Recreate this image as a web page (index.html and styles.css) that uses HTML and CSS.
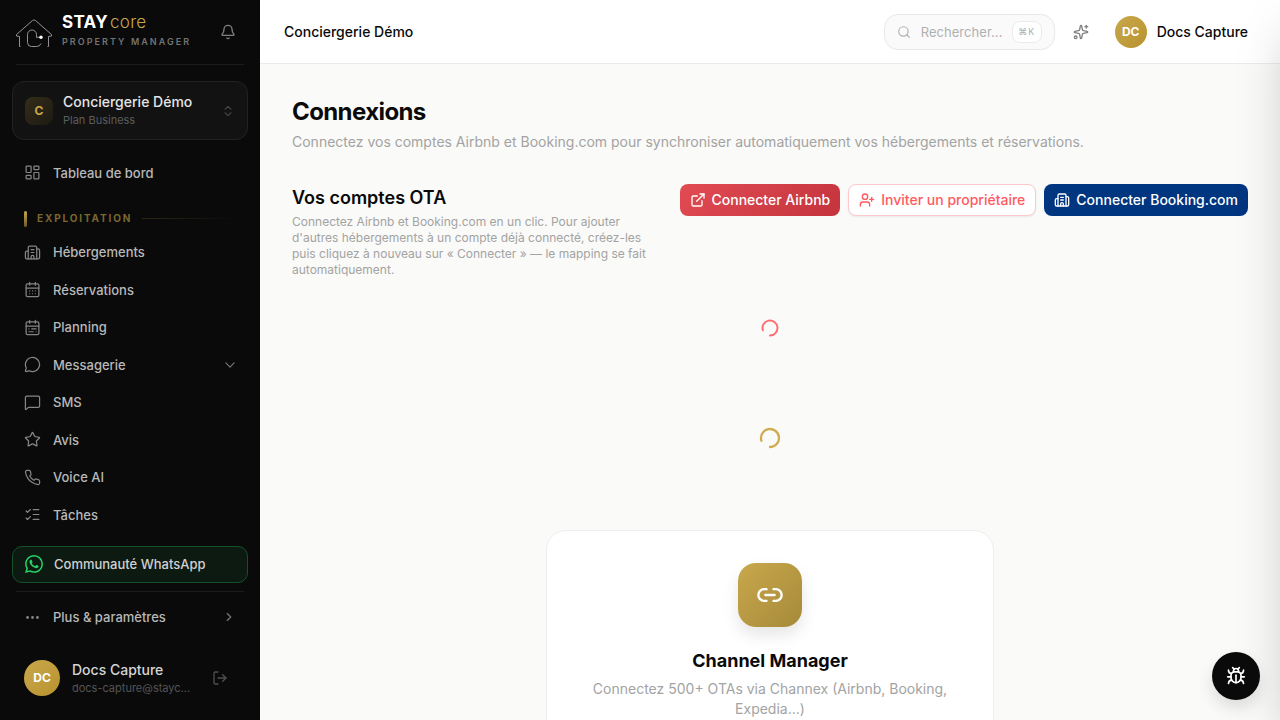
FILE: index.html
```html
<!DOCTYPE html>
<html lang="fr">
<head>
  <meta charset="UTF-8">
  <title>Connexions - STAYcore</title>
  <link rel="stylesheet" href="styles.css">
</head>
<body>

  <!-- Menu latéral -->
  <aside class="sidebar">
    <div class="brand">
      <svg class="brand-logo" width="36" height="28" viewBox="0 0 36 28">
        <path d="M4.500 27.500H3.500V17.500L.5 17V15.500L16.500 1.500Q18 .3 19.500 1.500L35.500 15.500V17L32.500 17.500V27.500H31.500"/>
        <path d="M20.500 18.500V15.500a4.500 4.500 0 0 0-9 0V23.500q0 4 4 4h5q3.500 0 4.500-3M20.500 18.300h4"/>
        <circle class="brand-dot" cx="25" cy="18.300" r="1.700"/>
      </svg>
      <div class="brand-text">
        <div class="brand-name"><b>STAY</b><span>core</span></div>
        <div class="brand-sub">PROPERTY MANAGER</div>
      </div>
      <svg class="icon bell" width="16" height="16" viewBox="0 0 24 24"><path d="M10.268 21a2 2 0 0 0 3.464 0"/><path d="M3.262 15.326A1 1 0 0 0 4 17h16a1 1 0 0 0 .74-1.673C19.410 13.956 18 12.499 18 8A6 6 0 0 0 6 8c0 4.499-1.411 5.956-2.738 7.326"/></svg>
    </div>
    <div class="line"></div>

    <div class="workspace">
      <div class="workspace-badge">C</div>
      <div class="workspace-text">
        <div class="workspace-name">Conciergerie Démo</div>
        <div class="workspace-plan">Plan Business</div>
      </div>
      <svg class="icon" width="14" height="14" viewBox="0 0 24 24"><path d="m7 15 5 5 5-5"/><path d="m7 9 5-5 5 5"/></svg>
    </div>

    <nav class="nav">
      <a class="nav-item">
        <svg class="icon" width="17" height="17" viewBox="0 0 24 24"><rect width="7" height="9" x="3" y="3" rx="1"/><rect width="7" height="5" x="14" y="3" rx="1"/><rect width="7" height="9" x="14" y="12" rx="1"/><rect width="7" height="5" x="3" y="16" rx="1"/></svg>
        <span>Tableau de bord</span>
      </a>

      <div class="nav-section">
        <i class="section-bar"></i>
        <span>EXPLOITATION</span>
        <i class="section-line"></i>
      </div>

      <a class="nav-item">
        <svg class="icon" width="17" height="17" viewBox="0 0 24 24"><path d="M10 12h4"/><path d="M10 8h4"/><path d="M14 21v-3a2 2 0 0 0-4 0v3"/><path d="M6 10H4a2 2 0 0 0-2 2v7a2 2 0 0 0 2 2h16a2 2 0 0 0 2-2V9a2 2 0 0 0-2-2h-2"/><path d="M6 21V5a2 2 0 0 1 2-2h8a2 2 0 0 1 2 2v16"/></svg>
        <span>Hébergements</span>
      </a>
      <a class="nav-item">
        <svg class="icon" width="17" height="17" viewBox="0 0 24 24"><path d="M8 2v4"/><path d="M16 2v4"/><rect width="18" height="18" x="3" y="4" rx="2"/><path d="M3 10h18"/><path d="M8 14h.01"/><path d="M12 14h.01"/><path d="M16 14h.01"/><path d="M8 18h.01"/><path d="M12 18h.01"/><path d="M16 18h.01"/></svg>
        <span>Réservations</span>
      </a>
      <a class="nav-item">
        <svg class="icon" width="17" height="17" viewBox="0 0 24 24"><rect width="18" height="18" x="3" y="4" rx="2"/><path d="M16 2v4"/><path d="M3 10h18"/><path d="M8 2v4"/><path d="M17 14h-6"/><path d="M13 18H7"/><path d="M7 14h.01"/><path d="M17 18h.01"/></svg>
        <span>Planning</span>
      </a>
      <a class="nav-item">
        <svg class="icon" width="17" height="17" viewBox="0 0 24 24"><path d="M2.992 16.342a2 2 0 0 1 .094 1.167l-1.065 3.290a1 1 0 0 0 1.236 1.168l3.413-.998a2 2 0 0 1 1.099.092 10 10 0 1 0-4.777-4.719"/></svg>
        <span>Messagerie</span>
        <svg class="icon chevron" width="14" height="14" viewBox="0 0 24 24"><path d="m5 8.500 7 7 7-7"/></svg>
      </a>
      <a class="nav-item">
        <svg class="icon" width="17" height="17" viewBox="0 0 24 24"><path d="M22 17a2 2 0 0 1-2 2H6.828a2 2 0 0 0-1.414.586l-2.202 2.202A.71.71 0 0 1 2 21.286V5a2 2 0 0 1 2-2h16a2 2 0 0 1 2 2z"/></svg>
        <span>SMS</span>
      </a>
      <a class="nav-item">
        <svg class="icon" width="17" height="17" viewBox="0 0 24 24"><path d="M11.525 2.295a.53.53 0 0 1 .95 0l2.310 4.679a2.123 2.123 0 0 0 1.595 1.160l5.166.756a.53.53 0 0 1 .294.904l-3.736 3.638a2.123 2.123 0 0 0-.611 1.878l.882 5.140a.53.53 0 0 1-.771.560l-4.618-2.428a2.122 2.122 0 0 0-1.973 0L6.396 21.010a.53.53 0 0 1-.770-.560l.881-5.139a2.122 2.122 0 0 0-.611-1.879L2.160 9.795a.53.53 0 0 1 .294-.906l5.165-.755a2.122 2.122 0 0 0 1.597-1.160z"/></svg>
        <span>Avis</span>
      </a>
      <a class="nav-item">
        <svg class="icon" width="17" height="17" viewBox="0 0 24 24"><path d="M22 16.920v3a2 2 0 0 1-2.180 2 19.790 19.790 0 0 1-8.630-3.070 19.500 19.500 0 0 1-6-6 19.790 19.790 0 0 1-3.070-8.670A2 2 0 0 1 4.110 2h3a2 2 0 0 1 2 1.720 12.840 12.840 0 0 0 .7 2.810 2 2 0 0 1-.45 2.110L8.090 9.910a16 16 0 0 0 6 6l1.270-1.270a2 2 0 0 1 2.110-.45 12.840 12.840 0 0 0 2.810.7A2 2 0 0 1 22 16.920z"/></svg>
        <span>Voice AI</span>
      </a>
      <a class="nav-item">
        <svg class="icon" width="17" height="17" viewBox="0 0 24 24"><path d="M13 5h8"/><path d="M13 12h8"/><path d="M13 19h8"/><path d="m3 17 2 2 4-4"/><path d="m3 7 2 2 4-4"/></svg>
        <span>Tâches</span>
      </a>
    </nav>

    <a class="whatsapp">
      <svg width="18" height="18" viewBox="0 0 24 24" fill="#25d366"><path d="M17.472 14.382c-.297-.149-1.758-.867-2.030-.967-.273-.099-.471-.148-.670.150-.197.297-.767.966-.940 1.164-.173.199-.347.223-.644.075-.297-.150-1.255-.463-2.390-1.475-.883-.788-1.480-1.761-1.653-2.059-.173-.297-.018-.458.130-.606.134-.133.298-.347.446-.520.149-.174.198-.298.298-.497.099-.198.050-.371-.025-.520-.075-.149-.669-1.612-.916-2.207-.242-.579-.487-.500-.669-.510-.173-.008-.371-.010-.570-.010-.198 0-.520.074-.792.372-.272.297-1.040 1.016-1.040 2.479 0 1.462 1.065 2.875 1.213 3.074.149.198 2.096 3.200 5.077 4.487.709.306 1.262.489 1.694.625.712.227 1.360.195 1.871.118.571-.085 1.758-.719 2.006-1.413.248-.694.248-1.289.173-1.413-.074-.124-.272-.198-.570-.347m-5.421 7.403h-.004a9.870 9.870 0 0 1-5.031-1.378l-.361-.214-3.741.982.998-3.648-.235-.374a9.860 9.860 0 0 1-1.510-5.260c.001-5.450 4.436-9.884 9.888-9.884 2.640 0 5.122 1.030 6.988 2.898a9.825 9.825 0 0 1 2.893 6.994c-.003 5.450-4.437 9.884-9.885 9.884m8.413-18.297A11.815 11.815 0 0 0 12.050 0C5.495 0 .160 5.335.157 11.892c0 2.096.547 4.142 1.588 5.945L.057 24l6.305-1.654a11.882 11.882 0 0 0 5.683 1.448h.005c6.554 0 11.890-5.335 11.893-11.893a11.821 11.821 0 0 0-3.480-8.413z"/></svg>
      <span>Communauté WhatsApp</span>
    </a>
    <div class="line"></div>
    <a class="nav-item more">
      <svg class="icon dots" width="17" height="17" viewBox="0 0 24 24"><circle cx="12" cy="12" r="1"/><circle cx="19" cy="12" r="1"/><circle cx="5" cy="12" r="1"/></svg>
      <span>Plus &amp; paramètres</span>
      <svg class="icon chevron" width="14" height="14" viewBox="0 0 24 24"><path d="m9 18 6-6-6-6"/></svg>
    </a>

    <div class="user">
      <div class="avatar">DC</div>
      <div class="user-text">
        <div class="user-name">Docs Capture</div>
        <div class="user-mail">docs-capture@stayc...</div>
      </div>
      <svg class="icon" width="16" height="16" viewBox="0 0 24 24"><path d="M9 21H5a2 2 0 0 1-2-2V5a2 2 0 0 1 2-2h4"/><path d="m16 17 5-5-5-5"/><path d="M21 12H9"/></svg>
    </div>
  </aside>

  <div class="page">
    <header class="topbar">
      <div class="topbar-title">Conciergerie Démo</div>
      <div class="search">
        <svg class="icon" width="14" height="14" viewBox="0 0 24 24"><circle cx="11" cy="11" r="8"/><path d="m21 21-4.340-4.340"/></svg>
        <span>Rechercher...</span>
        <kbd>⌘K</kbd>
      </div>
      <svg class="icon sparkles" width="16" height="16" viewBox="0 0 24 24"><path d="M11.017 2.814a1 1 0 0 1 1.966 0l1.051 5.558a2 2 0 0 0 1.594 1.594l5.558 1.051a1 1 0 0 1 0 1.966l-5.558 1.051a2 2 0 0 0-1.594 1.594l-1.051 5.558a1 1 0 0 1-1.966 0l-1.051-5.558a2 2 0 0 0-1.594-1.594l-5.558-1.051a1 1 0 0 1 0-1.966l5.558-1.051a2 2 0 0 0 1.594-1.594z"/><path d="M20 2v4"/><path d="M22 4h-4"/><circle cx="4" cy="20" r="2"/></svg>
      <div class="avatar small">DC</div>
      <div class="topbar-user">Docs Capture</div>
    </header>

    <main class="content">
      <h1>Connexions</h1>
      <p class="lead">Connectez vos comptes Airbnb et Booking.com pour synchroniser automatiquement vos hébergements et réservations.</p>

      <section class="ota">
        <div class="ota-text">
          <h2>Vos comptes OTA</h2>
          <p>Connectez Airbnb et Booking.com en un clic. Pour ajouter d'autres hébergements à un compte déjà connecté, créez-les puis cliquez à nouveau sur « Connecter » — le mapping se fait automatiquement.</p>
        </div>
        <div class="ota-buttons">
          <button class="btn btn-airbnb">
            <svg class="icon" width="16" height="16" viewBox="0 0 24 24"><path d="M15 3h6v6"/><path d="M10 14 21 3"/><path d="M18 13v6a2 2 0 0 1-2 2H5a2 2 0 0 1-2-2V8a2 2 0 0 1 2-2h6"/></svg>
            Connecter Airbnb
          </button>
          <button class="btn btn-invite">
            <svg class="icon" width="16" height="16" viewBox="0 0 24 24"><path d="M16 21v-2a4 4 0 0 0-4-4H6a4 4 0 0 0-4 4v2"/><circle cx="9" cy="7" r="4"/><path d="M19 8v6"/><path d="M22 11h-6"/></svg>
            Inviter un propriétaire
          </button>
          <button class="btn btn-booking">
            <svg class="icon" width="16" height="16" viewBox="0 0 24 24"><path d="M10 12h4"/><path d="M10 8h4"/><path d="M14 21v-3a2 2 0 0 0-4 0v3"/><path d="M6 10H4a2 2 0 0 0-2 2v7a2 2 0 0 0 2 2h16a2 2 0 0 0 2-2V9a2 2 0 0 0-2-2h-2"/><path d="M6 21V5a2 2 0 0 1 2-2h8a2 2 0 0 1 2 2v16"/></svg>
            Connecter Booking.com
          </button>
        </div>
      </section>

      <!-- Chargement -->
      <div class="loader">
        <svg class="icon spin-red" width="20" height="20" viewBox="0 0 24 24"><path d="M21 12a9 9 0 1 1-6.219-8.560" transform="rotate(162 12 12)"/></svg>
      </div>
      <div class="loader loader-gold">
        <svg class="icon spin-gold" width="24" height="24" viewBox="0 0 24 24"><path d="M21 12a9 9 0 1 1-6.219-8.560" transform="rotate(162 12 12)"/></svg>
      </div>

      <section class="card">
        <div class="card-icon">
          <svg class="icon" width="28" height="28" viewBox="0 0 24 24"><path d="M9 17H7A5 5 0 0 1 7 7h2"/><path d="M15 7h2a5 5 0 1 1 0 10h-2"/><path d="M8 12h8"/></svg>
        </div>
        <h3>Channel Manager</h3>
        <p>Connectez 500+ OTAs via Channex (Airbnb, Booking, Expedia...)</p>
      </section>
    </main>
  </div>

  <!-- Panneau fermé, hors écran à droite -->
  <div class="drawer"></div>

  <button class="bug-button">
    <svg class="icon" width="20" height="20" viewBox="0 0 24 24"><path d="M12 20v-9"/><path d="M14 7a4 4 0 0 1 4 4v3a6 6 0 0 1-12 0v-3a4 4 0 0 1 4-4z"/><path d="M14.120 3.880 16 2"/><path d="M21 21a4 4 0 0 0-3.810-4"/><path d="M21 5a4 4 0 0 1-3.550 3.970"/><path d="M22 13h-4"/><path d="M3 21a4 4 0 0 1 3.810-4"/><path d="M3 5a4 4 0 0 0 3.550 3.970"/><path d="M6 13H2"/><path d="m8 2 1.880 1.880"/><path d="M9 7.130V6a3 3 0 1 1 6 0v1.130"/></svg>
  </button>

</body>
</html>
```
FILE: styles.css
```css
* {
  box-sizing: border-box;
}

body {
  margin: 0;
  height: 100vh;
  overflow: hidden;
  display: flex;
  background: #fafaf8;
  color: #0a0a0a;
  font-family: Inter, sans-serif;
  font-size: 14px;
  line-height: 20px;
}

h1, h2, h3, p {
  margin: 0;
}

.icon {
  flex-shrink: 0;
  fill: none;
  stroke: currentColor;
  stroke-width: 2;
  stroke-linecap: round;
  stroke-linejoin: round;
}

/* Menu latéral */
.sidebar {
  width: 260px;
  flex-shrink: 0;
  display: flex;
  flex-direction: column;
  background: #0a0a0a;
  color: #b8b8b8;
}

.brand {
  height: 64px;
  display: flex;
  align-items: center;
  padding: 0 24px 0 16px;
}

.brand-logo {
  margin-top: 1px;
  fill: none;
  stroke: #a0a0a0;
  stroke-width: 0.9;
}

.brand-dot {
  fill: #fff;
  stroke: none;
}

.brand-text {
  flex: 1;
  margin-left: 10px;
  padding-bottom: 5px;
}

.brand-name {
  display: flex;
  gap: 2px;
  font-size: 17px;
  line-height: 20px;
  letter-spacing: 0.3px;
  color: #fff;
}

.brand-name span {
  color: #c9a84c;
  font-weight: 300;
}

.brand-sub {
  margin-top: 4px;
  font-size: 9px;
  line-height: 12px;
  font-weight: 600;
  letter-spacing: 2.05px;
  color: #737373;
}

.bell {
  color: #808080;
}

.line {
  height: 1px;
  flex-shrink: 0;
  margin: 0 16px;
  background: #1c1c1c;
}

.workspace {
  height: 59px;
  flex-shrink: 0;
  display: flex;
  align-items: center;
  margin: 16px 12px 0;
  padding: 0 12px;
  border: 1px solid #222;
  border-radius: 12px;
  background: #121212;
}

.workspace-badge {
  width: 28px;
  height: 28px;
  display: flex;
  align-items: center;
  justify-content: center;
  border-radius: 8px;
  background: linear-gradient(135deg, #352d19, #1c1a13);
  color: #c9a84c;
  font-size: 12px;
  font-weight: 700;
}

.workspace-text {
  flex: 1;
  margin-left: 10px;
  padding-bottom: 2px;
}

.workspace-name {
  font-weight: 500;
  color: #e5e5e5;
}

.workspace-plan {
  font-size: 11px;
  line-height: 16px;
  color: #5c5c5c;
}

.workspace .icon {
  color: #454545;
}

.nav {
  flex: 1;
  min-height: 0;
  overflow: hidden;
  display: flex;
  flex-direction: column;
  gap: 2px;
  padding: 15px 12px 0;
}

.nav-item {
  height: 35.5px;
  flex-shrink: 0;
  display: flex;
  align-items: center;
  gap: 12px;
  padding: 0 12px;
  font-size: 13px;
  font-weight: 500;
}

.nav-item .icon {
  color: #858585;
  stroke-width: 1.75;
}

.nav-item .chevron {
  margin-left: auto;
  margin-right: -1px;
  color: #777;
  stroke-width: 2;
}

.nav-section {
  height: 16px;
  flex-shrink: 0;
  display: flex;
  align-items: center;
  margin: 18px 12px 6px;
  font-size: 10px;
  font-weight: 700;
  letter-spacing: 1.85px;
  color: #7a672f;
}

.nav-section span {
  margin-top: -1px;
}

.section-bar {
  width: 3px;
  height: 16px;
  margin-right: 10px;
  border-radius: 2px;
  background: linear-gradient(#c9a84c, #6b5829);
}

.section-line {
  flex: 1;
  height: 1px;
  margin-left: 10px;
  background: linear-gradient(90deg, #2d2717, #0a0a0a);
}

.whatsapp {
  height: 37px;
  flex-shrink: 0;
  display: flex;
  align-items: center;
  gap: 12px;
  margin: 0 12px 8px;
  padding: 0 11px 1px 12px;
  border: 1px solid #12512a;
  border-radius: 10px;
  background: #0d1a12;
  color: #d0d0d0;
  font-size: 13px;
  font-weight: 500;
}

.whatsapp span {
  margin-left: -1px;
}

.more {
  margin: 7.5px 12px 0;
}

.more .chevron {
  margin-right: 0;
}

.nav-item .dots {
  stroke-width: 2;
}

.user {
  height: 84px;
  flex-shrink: 0;
  display: flex;
  align-items: center;
  margin-top: 1px;
  padding: 0 32px 0 24px;
}

.avatar {
  width: 36px;
  height: 36px;
  flex-shrink: 0;
  display: flex;
  align-items: center;
  justify-content: center;
  border-radius: 50%;
  background: linear-gradient(135deg, #c9a84c, #b8922e);
  color: #fff;
  font-size: 12px;
  font-weight: 700;
}

.avatar.small {
  width: 32px;
  height: 32px;
}

.user-text {
  width: 124px;
  margin: 0 auto 0 12px;
}

.user-name {
  font-weight: 500;
  color: #d4d4d4;
}

.user-mail {
  white-space: nowrap;
  font-size: 11px;
  line-height: 16px;
  color: #555;
}

.user .icon {
  color: #505050;
}

/* Barre du haut */
.page {
  flex: 1;
  min-width: 0;
}

.topbar {
  height: 64px;
  display: flex;
  align-items: center;
  padding: 0 32px 0 24px;
  border-bottom: 1px solid #ebebeb;
  background: #fff;
}

.topbar-title {
  flex: 1;
  font-weight: 500;
}

.search {
  width: 171px;
  height: 36px;
  display: flex;
  align-items: center;
  padding: 0 12px;
  border: 1px solid #e8e8e8;
  border-radius: 14px;
  background: #fafafa;
  color: #b0b0b0;
  font-size: 13px;
}

.search span {
  margin-left: 10px;
  letter-spacing: 0.05px;
}

.search kbd {
  width: 30px;
  height: 22px;
  margin-left: auto;
  border: 1px solid #ebebeb;
  border-radius: 8px;
  background: #fff;
  font-family: Inter, "DejaVu Sans", sans-serif;
  font-size: 9px;
  letter-spacing: 0.8px;
  text-align: center;
}

.sparkles {
  margin: 0 26px 0 18px;
  color: #808080;
}

.topbar-user {
  margin-left: 10px;
  font-weight: 500;
}

/* Contenu */
.content {
  padding: 32px;
}

h1 {
  font-size: 24px;
  line-height: 32px;
  font-weight: 700;
  letter-spacing: -0.6px;
}

.lead {
  margin-top: 4px;
  color: #a3a3a3;
}

.ota {
  display: flex;
  justify-content: space-between;
  margin-top: 32px;
}

.ota-text {
  width: 360px;
}

h2 {
  font-size: 18px;
  line-height: 28px;
  font-weight: 600;
}

.ota-text p {
  margin-top: 2px;
  font-size: 12px;
  line-height: 16px;
  color: #a3a3a3;
}

.ota-buttons {
  display: flex;
  align-items: flex-start;
  gap: 8px;
}

.btn {
  height: 32px;
  display: flex;
  align-items: center;
  gap: 6px;
  padding: 0 10px;
  border: 0;
  border-radius: 8px;
  font-family: inherit;
  font-size: 14px;
  line-height: 20px;
  font-weight: 500;
  white-space: nowrap;
  color: #fff;
}

.btn-airbnb {
  gap: 5.5px;
  background: linear-gradient(135deg, #e14b54, #c4343c);
}

.btn-invite {
  border: 1px solid #ffc9cc;
  background: #fff;
  color: #ff5a5f;
  box-shadow: 0 1px 2px rgba(0, 0, 0, 0.08);
}

.btn-booking {
  background: #003580;
}

.loader {
  display: flex;
  justify-content: center;
  margin-top: 40px;
}

.loader-gold {
  margin-top: 88px;
}

.spin-red {
  color: #ff6b70;
  stroke-width: 2.3;
}

.spin-gold {
  color: #d0ac50;
  stroke-width: 2.3;
}

.card {
  width: 448px;
  height: 300px;
  display: flex;
  flex-direction: column;
  align-items: center;
  margin: 80px auto 0;
  padding: 32px;
  border: 1px solid #eee;
  border-radius: 20px;
  background: #fff;
  text-align: center;
}

.card-icon {
  width: 64px;
  height: 64px;
  display: flex;
  align-items: center;
  justify-content: center;
  border-radius: 18px;
  background: linear-gradient(135deg, #c9a84c, #a68a3a);
  color: #fff;
  box-shadow: 0 8px 16px rgba(0, 0, 0, 0.1);
}

.card h3 {
  margin-top: 20px;
  font-size: 18px;
  line-height: 28px;
  font-weight: 700;
}

.card p {
  margin-top: 4px;
  color: #a3a3a3;
}

.drawer {
  position: fixed;
  top: 0;
  left: 100%;
  width: 400px;
  height: 100%;
  box-shadow: 0 25px 50px -12px rgba(0, 0, 0, 0.25);
}

.bug-button {
  position: fixed;
  right: 20px;
  bottom: 20px;
  width: 48px;
  height: 48px;
  display: flex;
  align-items: center;
  justify-content: center;
  padding: 0;
  border: 0;
  border-radius: 50%;
  background: #0a0a0a;
  color: #fff;
  box-shadow: 0 8px 16px rgba(0, 0, 0, 0.12);
}
```
